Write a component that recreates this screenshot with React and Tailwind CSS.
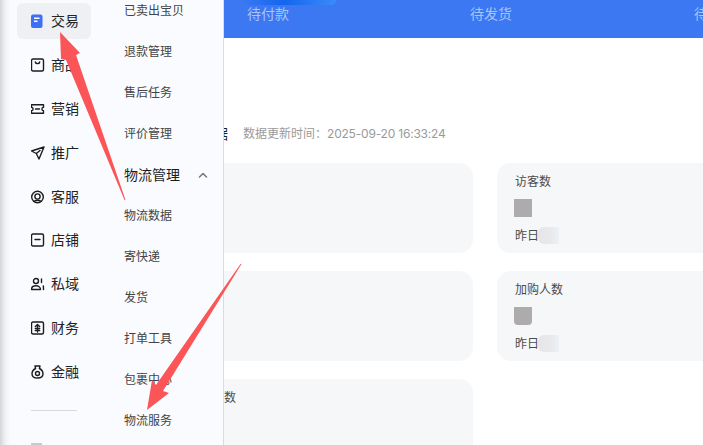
import React from 'react';

const font = 'font-["Inter","Noto_Sans_CJK_SC",sans-serif]';

function Icon({ children }) {
  return (
    <svg viewBox="0.5 0 14 14" className="h-[14px] w-[14px] shrink-0" fill="none" stroke="#1c1c1c" strokeWidth="1.4" strokeLinecap="round" strokeLinejoin="round">
      {children}
    </svg>
  );
}

const railItems = [
  { label: '交易', active: true, icon: (
    <svg viewBox="0 0 14 14" className="h-[14px] w-[14px] shrink-0">
      <rect x="0" y="0.5" width="11.5" height="13.5" rx="2" fill="#3f6ff5" />
      <path d="M3 3.500h5.500v1.500H3zM3 6.500h3.500V8H3z" fill="#fff" />
    </svg>
  ) },
  { label: '商品', icon: <Icon><rect x="1" y="1" width="12" height="12" rx="1.500" /><path d="M4.800 4c.4 2.200 4 2.200 4.400 0" /></Icon> },
  { label: '营销', icon: <Icon><path d="M1 2.800h12v2.600a1.600 1.600 0 0 0 0 3.200v2.600H1V8.600a1.600 1.600 0 0 0 0-3.200z" /><path d="M5 7h4" /></Icon> },
  { label: '推广', icon: <Icon><path d="M13.500 1 1 5l4.800 2.500L8.500 13zM5.800 7.500 9.500 4.500" /></Icon> },
  { label: '客服', icon: <Icon><circle cx="7" cy="7" r="5.800" /><circle cx="7" cy="6.500" r="2.600" /><path d="M3.500 11.500c1-1.600 6-1.600 7 0" /></Icon> },
  { label: '店铺', icon: <Icon><rect x="1" y="1" width="12" height="12" rx="1.500" /><path d="M4.500 6.500h5" /></Icon> },
  { label: '私域', icon: <Icon><circle cx="5.500" cy="4" r="2.500" /><path d="M1 12.500c0-5 9-5 9 0zM11 2v3.500M12.800 9c.2 1 .2 2.500.2 3.500" /></Icon> },
  { label: '财务', icon: <Icon><rect x="1" y="1" width="12" height="12" rx="1.500" /><path d="M4.800 5.500 7 3.500l2.200 2M4.800 7.500h4.400M4.800 9.500h4.400M7 3.500v7.500" /></Icon> },
  { label: '金融', icon: <Icon><path d="M4.500 1h5l-.6 2.500c2 1 3.600 2.800 3.600 5.200 0 3-2 4.300-5.500 4.300s-5.500-1.300-5.500-4.300c0-2.400 1.600-4.200 3.600-5.200z" /><circle cx="7" cy="8.500" r="2" /></Icon> },
];

const subItems = [
  { label: '已卖出宝贝' },
  { label: '退款管理' },
  { label: '售后任务' },
  { label: '评价管理' },
  { label: '物流管理', heading: true },
  { label: '物流数据' },
  { label: '寄快递' },
  { label: '发货' },
  { label: '打单工具' },
  { label: '包裹中心' },
  { label: '物流服务' },
];

function StatCard({ label, smudge }) {
  return (
    <div className="h-[90px] rounded-l-[14px] bg-[#f6f7f9] pl-[18px] pt-[11px] text-xs text-[#4b4b4b]">
      <div className="leading-4">{label}</div>
      <div className={`-ml-px mt-[9px] h-[18px] w-[18px] bg-[#adabac] ${smudge ? 'rounded-b-[4px]' : ''}`} />
      <div className="mt-[10px] flex items-center leading-4">
        昨日
        <span className="-ml-px h-[17px] w-[21px] rounded-l-[6px] bg-[linear-gradient(90deg,#e6e6e8,#e9e8ea_60%,#eef1f7)]" />
      </div>
    </div>
  );
}

export default function App() {
  return (
    <div className={`relative flex h-[445px] w-[703px] overflow-hidden bg-white ${font}`}>
      {/* Left rail */}
      <aside className="flex h-full w-[113px] shrink-0 flex-col bg-[linear-gradient(90deg,#d4d5d8_0,#eff0f3_5px,#fafbff_10px)] pt-[3px]">
        {railItems.map((item) => (
          <div
            key={item.label}
            className={`ml-[17px] mb-[8px] flex h-[36px] w-[74px] items-center gap-[6px] rounded-md pl-[14px] text-sm text-[#222] ${item.active ? 'bg-[#eef0f3]' : ''}`}
          >
            {item.icon}
            <span>{item.label}</span>
          </div>
        ))}
        <div className="ml-[31px] mt-[12px] h-px w-[46px] bg-[#d8d9dc]" />
        <div className="ml-[31px] mt-[32px] h-[2px] w-[11px] bg-[#c9cacd]" />
      </aside>

      {/* Second level menu */}
      <nav className="-mt-[10px] h-[455px] w-[111px] shrink-0 border-r border-[#d9dbe2] bg-[#fafbfe]">
        {subItems.map((item) => (
          <div key={item.label} className="flex h-[41px] items-center pl-[11px] pr-[15px]">
            <span className={item.heading ? 'text-sm text-[#1c1c1c]' : 'text-xs text-[#444]'}>{item.label}</span>
            {item.heading && (
              <svg viewBox="0 0 10 6" className="ml-auto h-[6px] w-[10px]" fill="none" stroke="#777" strokeWidth="1.500" strokeLinecap="round" strokeLinejoin="round">
                <path d="M1.500 5 5 1.500 8.500 5" />
              </svg>
            )}
          </div>
        ))}
      </nav>

      {/* Main content */}
      <main className="flex min-w-0 flex-1 flex-col overflow-hidden">
        <div className="relative flex h-[38px] shrink-0 items-start whitespace-nowrap bg-[#3b78f2] pt-[4px] text-sm leading-5 text-[#a9c4f7]">
          <div className="absolute left-[18px] top-0 h-[5px] w-[94px] rounded-br-[10px] bg-[linear-gradient(90deg,#3b78f2,#1466ee_45%,#3b8bfa)]" />
          <span className="ml-[23px] shrink-0">待付款</span>
          <span className="ml-[181px] shrink-0">待发货</span>
          <span className="ml-[182px] shrink-0">待收货</span>
        </div>

        <div className="mt-[86px] flex h-[20px] shrink-0 items-center whitespace-nowrap">
          <span className="-ml-[10px] text-sm text-[#1c1c1c]">据</span>
          <span className="ml-[15px] text-xs text-[#9a9a9a]">
            数据更新时间：<span className="tracking-[-0.2px]">2025-09-20 16:33:24</span>
          </span>
        </div>

        <div className="mt-[19px] grid grid-cols-[249px_230px] gap-x-[24px] gap-y-[18px]">
          <div className="h-[90px] rounded-r-[14px] bg-[#f6f7f9]" />
          <StatCard label="访客数" />
          <div className="h-[90px] rounded-r-[14px] bg-[#f6f7f9]" />
          <StatCard label="加购人数" smudge />
          <div className="h-[90px] rounded-r-[14px] bg-[#f6f7f9] pt-[11px] text-xs leading-4 text-[#4b4b4b]">数</div>
        </div>
      </main>

      {/* Annotation arrows */}
      <svg className="pointer-events-none absolute left-0 top-0 h-[445px] w-[703px]" viewBox="0 0 703 445" fill="#fb5558">
        <polygon points="60,32 80,53 76,55 125.500,200 124.500,200 66,60 61,59" />
        <polygon points="241.500,264 163,391 169,393 147,410 152,380 156,385 240.500,264" />
      </svg>
    </div>
  );
}
